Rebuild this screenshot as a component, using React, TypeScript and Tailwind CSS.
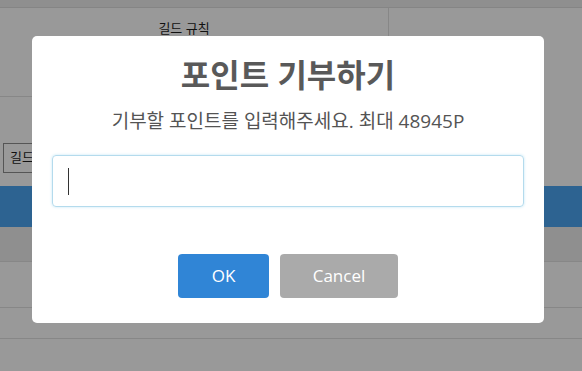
export default function App() {
  return (
    <div className="relative h-[371px] w-full overflow-hidden bg-[#999999] font-['Open_Sans','Noto_Sans_CJK_KR',sans-serif]">
      {/* page behind the overlay */}
      <div className="h-[8px] border-b border-[#858585] bg-[#8f8f8f]" />
      <div className="flex">
        <div className="w-[389px] border-r border-[#878787]">
          <div className="h-[89px] border-b border-[#878787] pr-[20px] pt-[11px] text-center text-[13px] leading-[18px] text-[#111]">
            길드 규칙
          </div>
        </div>
        <div className="flex-1" />
      </div>
      <div className="px-[3px] pt-[46px]">
        <div className="flex h-[30px] w-[90px] items-center border border-[#555] px-[6px] text-[13px] text-[#111]">
          길드
        </div>
      </div>
      <div className="mt-[13px] h-[41px] bg-[#2d6391]" />
      <div className="h-[35px] border-b border-[#878787] bg-[#8f8f8f]" />
      <div className="h-[46px] border-b border-[#878787]" />
      <div className="h-[31px] border-b border-[#878787]" />

      {/* modal */}
      <div className="absolute left-[32px] top-[36px] flex h-[287px] w-[512px] flex-col items-center rounded-[5px] bg-white">
        <div className="mt-[20px] text-[32px] font-bold leading-[38px] text-[#595959]">
          포인트 기부하기
        </div>
        <div className="mt-[14px] text-[19px] leading-[26px] text-[#545454]">
          기부할 포인트를 입력해주세요. 최대 48945P
        </div>
        <div className="mt-[21px] flex h-[52px] w-[472px] items-center rounded-[4px] border border-[#b4dbed] pl-[15px] shadow-[0_0_3px_#c4e6f5]">
          <div className="h-[27px] w-[1px] bg-[#333]" />
        </div>
        <div className="mt-[47px] flex gap-[11px]">
          <button className="h-[44px] w-[91px] rounded-[4px] bg-[#3085d6] text-[17px] text-white">
            OK
          </button>
          <button className="h-[44px] w-[118px] rounded-[4px] bg-[#aaaaaa] text-[17px] text-white">
            Cancel
          </button>
        </div>
      </div>
    </div>
  );
}
